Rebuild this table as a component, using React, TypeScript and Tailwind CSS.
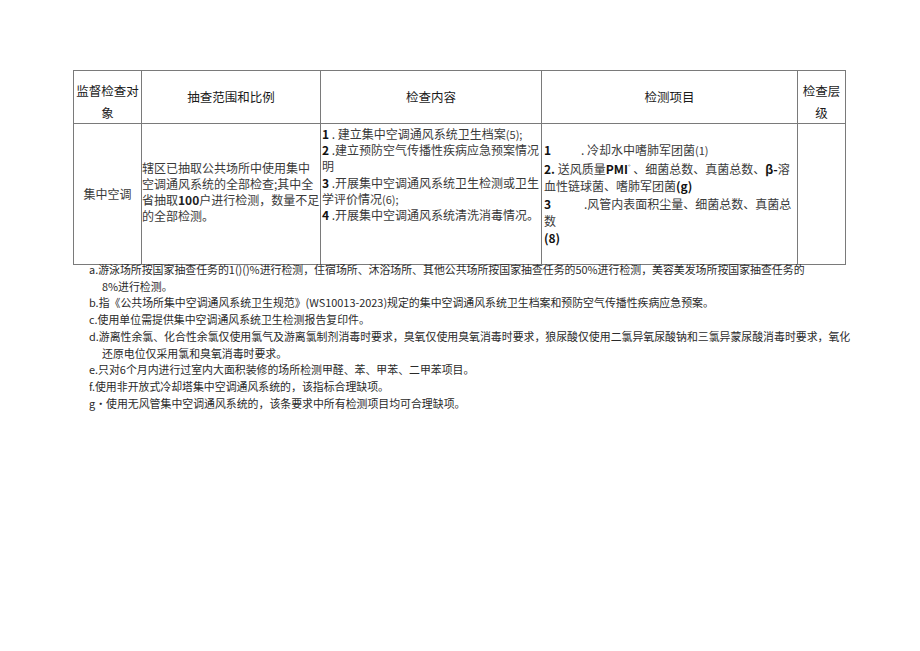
const cell = "border border-[#7a7a7a] p-0";

const notes: { text: React.ReactNode; indent?: boolean }[] = [
  { text: "a.游泳场所按国家抽查任务的1()()%进行检测，住宿场所、沐浴场所、其他公共场所按国家抽查任务的50%进行检测，美容美发场所按国家抽查任务的" },
  { text: "8%进行检测。", indent: true },
  { text: "b.指《公共场所集中空调通风系统卫生规范》(WS10013-2023)规定的集中空调通风系统卫生档案和预防空气传播性疾病应急预案。" },
  { text: "c.使用单位需提供集中空调通风系统卫生检测报告复印件。" },
  { text: "d.游离性余氯、化合性余氯仅使用氯气及游离氯制剂消毒时要求，臭氧仅使用臭氧消毒时要求，狼尿酸仅使用二氯异氧尿酸钠和三氯异蒙尿酸消毒时要求，氧化" },
  { text: "还原电位仅采用氯和臭氧消毒时要求。", indent: true },
  { text: "e.只对6个月内进行过室内大面积装修的场所检测甲醛、苯、甲苯、二甲苯项目。" },
  { text: "f.使用非开放式冷却塔集中空调通风系统的，该指标合理缺项。" },
  { text: "g·使用无风管集中空调通风系统的，该条要求中所有检测项目均可合理缺项。" },
];

export default function App() {
  return (
    <div className="min-h-screen bg-white pt-[70px] pl-[73px] text-[#222] font-['Noto_Sans_CJK_SC','Noto_Sans',sans-serif]">
      <table className="border-collapse table-fixed w-[772px]">
        <colgroup>
          <col className="w-[68px]" />
          <col className="w-[179px]" />
          <col className="w-[221px]" />
          <col className="w-[256px]" />
          <col className="w-[48px]" />
        </colgroup>
        <tbody>
          {/* header */}
          <tr className="h-[50px] text-[12.5px] leading-[21.5px] text-[#1a1a1a]">
            <td className={`${cell} text-center align-middle pt-[9px] whitespace-nowrap`}>
              监督检查对
              <br />象
            </td>
            <td className={`${cell} text-center align-middle`}>抽查范围和比例</td>
            <td className={`${cell} text-center align-middle`}>检查内容</td>
            <td className={`${cell} text-center align-middle`}>检测项目</td>
            <td className={`${cell} text-center align-middle pt-[9px] whitespace-nowrap`}>
              检查层
              <br />级
            </td>
          </tr>

          {/* body */}
          <tr className="h-[141px] text-[12px] text-[#3a3a3a]">
            <td className={`${cell} text-center align-middle`}>集中空调</td>

            <td className={`${cell} align-middle whitespace-nowrap leading-[16px] pb-[4px]`}>
              <div>辖区已抽取公共场所中使用集中</div>
              <div>空调通风系统的全部检查;其中全</div>
              <div>
                省抽取<b className="font-bold text-[#222]">100</b>户进行检测，数量不足
              </div>
              <div>的全部检测。</div>
            </td>

            <td className={`${cell} align-top whitespace-nowrap leading-[16.2px] pt-[2px] pl-[1px]`}>
              <div>
                <b className="font-bold text-[#111]">1</b> . 建立集中空调通风系统卫生档案<span className="text-[11px]">(5);</span>
              </div>
              <div>
                <b className="font-bold text-[#111]">2</b> .建立预防空气传播性疾病应急预案情况
              </div>
              <div>明</div>
              <div>
                <b className="font-bold text-[#111]">3</b> .开展集中空调通风系统卫生检测或卫生
              </div>
              <div>
                学评价情况<span className="text-[11px]">(6);</span>
              </div>
              <div>
                <b className="font-bold text-[#111]">4</b> .开展集中空调通风系统清洗消毒情况。
              </div>
            </td>

            <td className={`${cell} align-middle whitespace-nowrap leading-[17.4px] pl-[2px]`}>
              <div className="flex">
                <b className="font-bold text-[#111] w-[37px]">1</b>
                <span>. 冷却水中嗜肺军团菌<span className="text-[11px]">(1)</span></span>
              </div>
              <div>
                <b className="font-bold text-[#111]">2.</b> 送风质量<b className="font-bold text-[#111]">PMI</b>
                <sup className="text-[7px]">°</sup> 、细菌总数、真菌总数、<b className="font-bold text-[#111]">β-</b>溶
              </div>
              <div>
                血性链球菌、嗜肺军团菌<b className="font-bold text-[#111]">(g)</b>
              </div>
              <div className="flex">
                <b className="font-bold text-[#111] w-[40px]">3</b>
                <span>.风管内表面积尘量、细菌总数、真菌总</span>
              </div>
              <div>数</div>
              <div>
                <b className="font-bold text-[#111]">(8)</b>
              </div>
            </td>

            <td className={cell}></td>
          </tr>
        </tbody>
      </table>

      {/* notes */}
      <div className="-mt-[4px] pl-[16px] text-[10.9px] leading-[16.7px] text-[#2a2a2a] whitespace-nowrap">
        {notes.map((n, i) => (
          <div key={i} className={n.indent ? "pl-[13px]" : ""}>
            {n.text}
          </div>
        ))}
      </div>
    </div>
  );
}
